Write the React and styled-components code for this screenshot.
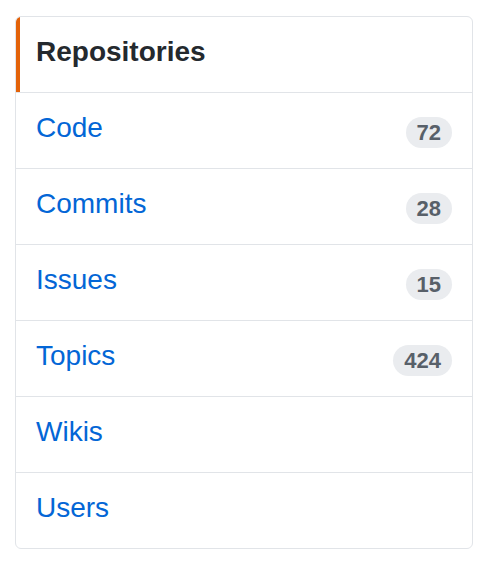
import React from "react";
import styled, { createGlobalStyle } from "styled-components";

const Global = createGlobalStyle`
  html, body { margin: 0; padding: 0; background: #fff; }
  body { font-family: "Liberation Sans", Arial, sans-serif; }
`;

const Page = styled.div`
  padding: 16px 11px 0 15px;
`;

const Menu = styled.nav`
  width: 456px;
  border: 1px solid #e1e4e8;
  border-radius: 6px;
  background: #fff;
  overflow: hidden;
`;

const Row = styled.a`
  position: relative;
  display: flex;
  align-items: center;
  justify-content: space-between;
  height: 75px;
  padding: 0 20px;
  text-decoration: none;
  border-bottom: 1px solid #e1e4e8;
  &:last-child { border-bottom: none; }
  ${(p) =>
    p.$selected &&
    `
    &::before {
      content: "";
      position: absolute;
      left: 0; top: 0; bottom: 0;
      width: 4px;
      background: #e36209;
      border-top-left-radius: 6px;
    }
  `}
`;

const Label = styled.span`
  font-size: 28px;
  line-height: 42px;
  margin-bottom: 5px;
  color: ${(p) => (p.$heading ? "#24292e" : "#0366d6")};
  font-weight: ${(p) => (p.$heading ? 700 : 400)};
`;

const Counter = styled.span`
  margin-top: 4px;
  display: inline-block;
  padding: 2px 11px;
  font-size: 22px;
  line-height: 27px;
  font-weight: 700;
  color: #586069;
  background: #eaecef;
  border-radius: 20px;
`;

const items = [
  { name: "Code", count: 72 },
  { name: "Commits", count: 28 },
  { name: "Issues", count: 15 },
  { name: "Topics", count: 424 },
  { name: "Wikis" },
  { name: "Users" },
];

export default function App() {
  return (
    <Page>
      <Global />
      <Menu>
        <Row $selected>
          <Label $heading>Repositories</Label>
        </Row>
        {items.map((it) => (
          <Row key={it.name} href="#">
            <Label>{it.name}</Label>
            {it.count != null && <Counter>{it.count}</Counter>}
          </Row>
        ))}
      </Menu>
    </Page>
  );
}
